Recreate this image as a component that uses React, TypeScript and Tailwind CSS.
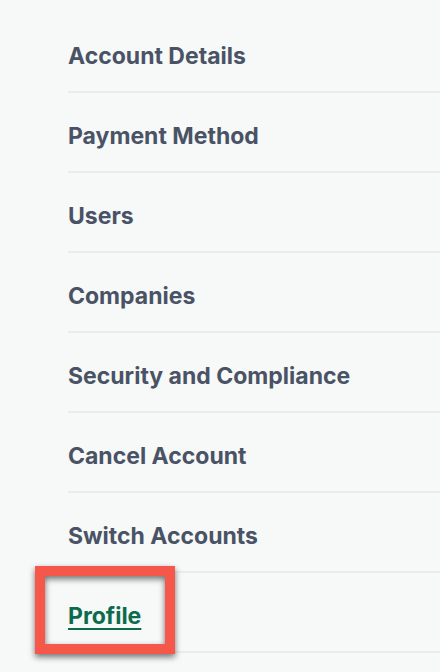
import React from "react";

const items = [
  "Account Details",
  "Payment Method",
  "Users",
  "Companies",
  "Security and Compliance",
  "Cancel Account",
  "Switch Accounts",
];

export default function App() {
  return (
    <div
      className="w-[440px] h-[672px] overflow-hidden bg-[#f7f8f8] pt-[13px]"
      style={{ fontFamily: "Inter, 'Liberation Sans', sans-serif" }}
    >
      <ul className="ml-[68px]">
        {items.map((t) => (
          <li
            key={t}
            className="h-[80px] border-b-2 border-[#ebebeb] flex items-center pt-[8px]"
          >
            <span className="text-[23px] font-bold text-[#495365] leading-none">{t}</span>
          </li>
        ))}
        <li className="relative h-[80px] border-b-2 border-[#ebebeb] flex items-center pt-[8px]">
          <a
            href="#"
            className="text-[23px] font-bold text-[#0b6b4c] underline decoration-2 underline-offset-[4px] leading-none"
          >
            Profile
          </a>
          <div className="absolute left-[-33px] top-[-7px] w-[140px] h-[88px] border-[10px] border-[#f5584a] drop-shadow-[0_3px_3px_rgba(0,0,0,0.55)]" />
        </li>
      </ul>
    </div>
  );
}
